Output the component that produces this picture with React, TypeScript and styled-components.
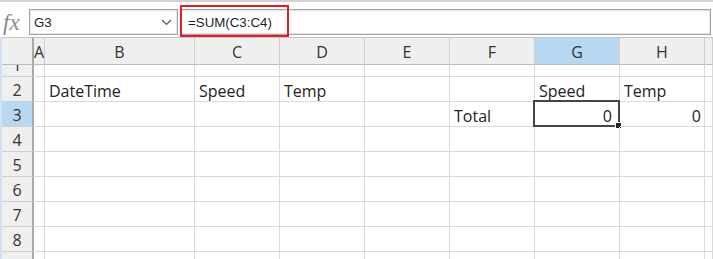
import { Fragment } from "react"
import styled, { createGlobalStyle } from "styled-components"

const GlobalStyle = createGlobalStyle`
  html, body {
    margin: 0;
    padding: 0;
    background: #fff;
    overflow: hidden;
  }
`

const Window = styled.div`
  width: 713px;
  height: 259px;
  overflow: hidden;
  background: #fff;
`

const FormulaBar = styled.div`
  position: relative;
  box-sizing: border-box;
  height: 37px;
  border-top: 2px solid #d2d2d2;
  display: flex;
  align-items: flex-start;
  padding-top: 7px;
`

const Fx = styled.span`
  width: 29px;
  padding: 3px 0 0 3px;
  box-sizing: border-box;
  font-family: "Liberation Serif", serif;
  font-style: italic;
  font-size: 23px;
  line-height: 22px;
  color: #8a8a8a;
`

const Field = styled.div<{ $width?: number }>`
  box-sizing: border-box;
  height: 26px;
  ${(p) => (p.$width ? `width: ${p.$width}px;` : "flex: 1;")}
  border: 1px solid #a3a3a3;
  box-shadow: inset 0 0 0 1px #e6e6e6;
  display: flex;
  align-items: center;
  padding: 0 5px 0 4px;
  font-family: "Liberation Sans", Arial, sans-serif;
  font-size: 13.3px;
  color: #1e1e2a;
  margin-right: 2px;
`

const FieldText = styled.span<{ $indent?: number }>`
  flex: 1;
  padding-top: 1px;
  padding-left: ${(p) => p.$indent ?? 0}px;
`

const Highlight = styled.div`
  position: absolute;
  left: 180px;
  top: 3px;
  width: 109px;
  height: 32px;
  box-sizing: border-box;
  border: 2px solid #e31c25;
`

const Sheet = styled.div`
  display: grid;
  grid-template-columns: 32px 11px 150px repeat(6, 85px) 1fr;
  grid-template-rows: 28px 12px repeat(8, 25px);
  border-left: 2px solid #cfe1f3;
  font-family: "Open Sans", "Noto Sans", sans-serif;
  font-size: 16px;
  color: #222;
`

const ColHead = styled.div<{ $selected?: boolean }>`
  box-sizing: border-box;
  border-top: 1px solid #c6c6c6;
  border-bottom: 1px solid #bcbcbc;
  border-right: 1px solid #cfcfcf;
  background: ${(p) => (p.$selected ? "#b8d7f1" : "#efefef")};
  display: flex;
  align-items: center;
  justify-content: center;
  color: #333;
  padding-top: 2px;
`

const Corner = styled(ColHead)`
  border-right: 2px solid #a9a9a9;
`

const RowHead = styled.div<{ $selected?: boolean }>`
  box-sizing: border-box;
  border-right: 2px solid #a9a9a9;
  border-bottom: 1px solid #cfcfcf;
  background: ${(p) => (p.$selected ? "#b8d7f1" : "#efefef")};
  display: flex;
  align-items: center;
  justify-content: center;
  overflow: hidden;
  color: #333;
  padding-top: 2px;
`

const ClippedLabel = styled.span`
  margin-top: -14px;
`

const Cell = styled.div<{ $right?: boolean }>`
  position: relative;
  box-sizing: border-box;
  border-right: 1px solid #dadada;
  border-bottom: 1px solid #dadada;
  display: flex;
  align-items: flex-end;
  justify-content: ${(p) => (p.$right ? "flex-end" : "flex-start")};
  padding: 0 3px 0 4px;
  line-height: 20px;
  white-space: nowrap;
`

const Selection = styled.div`
  position: absolute;
  left: -2px;
  top: -2px;
  right: -1px;
  bottom: -1px;
  border: 2px solid #444;
  pointer-events: none;
`

const Handle = styled.div`
  position: absolute;
  right: -4px;
  bottom: -4px;
  width: 5px;
  height: 5px;
  background: #222;
  border: 1px solid #fff;
`

const SelectedValue = styled.span`
  padding-right: 4px;
`

const columns = ["A", "B", "C", "D", "E", "F", "G", "H", ""]

type Row = { label: string; cells?: Record<number, string>; right?: number[] }

const rows: Row[] = [
  { label: "1" },
  { label: "2", cells: { 1: "DateTime", 2: "Speed", 3: "Temp", 6: "Speed", 7: "Temp" } },
  { label: "3", cells: { 5: "Total", 6: "0", 7: "0" }, right: [6, 7] },
  { label: "4" },
  { label: "5" },
  { label: "6" },
  { label: "7" },
  { label: "8" },
  { label: "9" },
]

function Chevron() {
  return (
    <svg width="11" height="7" viewBox="0 0 11 7">
      <polyline points="1,1 5.5,5.5 10,1" fill="none" stroke="#555" strokeWidth="1.2" />
    </svg>
  )
}

function App() {
  return (
    <Window>
      <GlobalStyle />
      <FormulaBar>
        <Fx>fx</Fx>
        <Field $width={149}>
          <FieldText>G3</FieldText>
          <Chevron />
        </Field>
        <Field>
          <FieldText $indent={3}>=SUM(C3:C4)</FieldText>
        </Field>
        <Highlight />
      </FormulaBar>
      <Sheet>
        <Corner />
        {columns.map((c) => (
          <ColHead key={c || "x"} $selected={c === "G"}>
            {c}
          </ColHead>
        ))}
        {rows.map((r) => (
          <Fragment key={r.label}>
            <RowHead $selected={r.label === "3"}>
              {r.label === "1" ? <ClippedLabel>1</ClippedLabel> : r.label}
            </RowHead>
            {columns.map((_, i) => {
              const isSel = r.label === "3" && i === 6
              const text = r.cells?.[i] ?? ""
              return (
                <Cell key={i} $right={r.right?.includes(i)}>
                  {isSel ? <SelectedValue>{text}</SelectedValue> : text}
                  {isSel && (
                    <Selection>
                      <Handle />
                    </Selection>
                  )}
                </Cell>
              )
            })}
          </Fragment>
        ))}
      </Sheet>
    </Window>
  )
}

export default App
